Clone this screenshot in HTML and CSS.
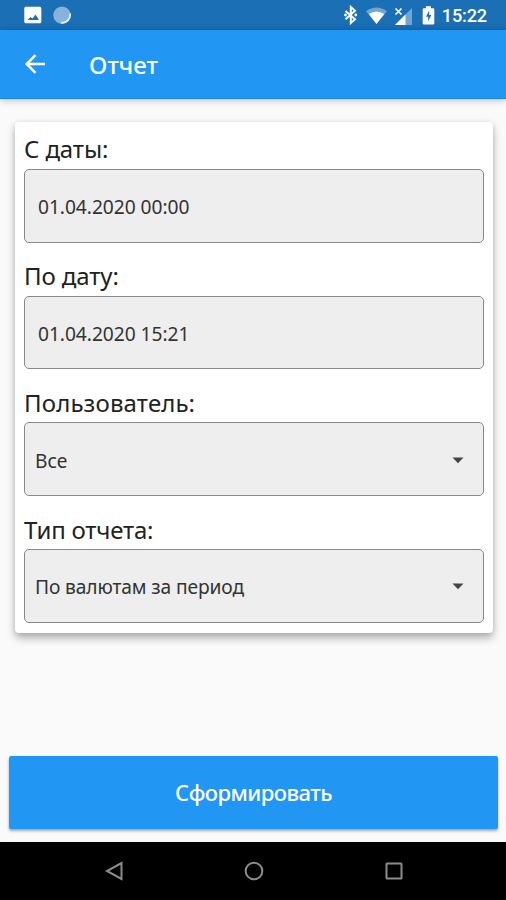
FILE: index.html
```html
<!DOCTYPE html>
<html lang="ru">
<head>
<meta charset="utf-8">
<title>Отчет</title>
<link rel="stylesheet" href="styles.css">
</head>
<body>
<div class="screen">
  <div class="status">
    <svg class="status-left" width="50" height="18" viewBox="0 0 50 18">
      <rect x="0.3" y="0.8" width="17" height="16.5" rx="1.5" fill="#fff"/>
      <path d="M3.500 14l3-3 2 1.500 3-4 3.500 5.500z" fill="#1a6fb5"/>
      <circle cx="38" cy="9.200" r="8.700" fill="#86b2dc"/>
      <path d="M46 7.500a8 8 0 0 1-9 9.200" fill="none" stroke="#e6f1fa" stroke-width="1.800"/>
    </svg>
    <div class="status-right">
      <svg width="92" height="20" viewBox="0 0 92 20">
        <path d="M2.500 6L12 14.300L7.800 18V2L12 5.800L2.500 14.200" fill="none" stroke="#fff" stroke-width="2"/>
        <circle cx="2.500" cy="10" r="1.400" fill="#fff"/><circle cx="12.800" cy="10" r="1.400" fill="#fff"/>
        <path d="M23 6.200Q33.300-1.200 44 6.200L33.500 19z" fill="#6ea6d6"/>
        <path d="M25.800 9Q33.500 4 41.200 9L33.500 19z" fill="#fff"/>
        <path d="M69 3V20H52z" fill="#6ea6d6"/>
        <path d="M62.500 9.500V20H52z" fill="#fff"/>
        <path d="M52.500 3.500l6 6m0-6l-6 6" stroke="#fff" stroke-width="1.700"/>
        <path d="M83 1.300h5v2h2a1.300 1.300 0 0 1 1.300 1.300V18.300a1.300 1.300 0 0 1-1.300 1.300h-9A1.300 1.300 0 0 1 79.700 18.300V4.600A1.300 1.300 0 0 1 81 3.300h2z" fill="#fff"/>
        <path d="M86.200 5.500L83 11.700h2.200v4.500L88.300 10h-2.100z" fill="#1a6fb5"/>
      </svg>
      <span class="clock">15:22</span>
    </div>
  </div>
  <header class="appbar">
    <svg width="22" height="20" viewBox="0 0 22 20" fill="none" stroke="#fff" stroke-width="2.500"><path d="M21 10H3M11.500 1.200L2.700 10L11.500 18.800"/></svg>
    <h1 class="title">Отчет</h1>
  </header>
  <main class="content">
    <section class="card">
      <div class="label from">С даты:</div>
      <div class="field date"><span>01.04.2020 00:00</span></div>
      <div class="label to">По дату:</div>
      <div class="field date"><span>01.04.2020 15:21</span></div>
      <div class="label user">Пользователь:</div>
      <div class="field"><span class="all">Все</span><svg width="12" height="7" viewBox="0 0 12 7"><path d="M0.500 0.500h11L6 6.300z" fill="#444"/></svg></div>
      <div class="label type">Тип отчета:</div>
      <div class="field"><span class="period">По валютам за период</span><svg width="12" height="7" viewBox="0 0 12 7"><path d="M0.500 0.500h11L6 6.300z" fill="#444"/></svg></div>
    </section>
    <button class="submit"><span>Сформировать</span></button>
  </main>
  <nav class="nav">
    <svg width="20" height="20" viewBox="0 0 20 20"><path d="M17.500 2v16L3 10z"/></svg>
    <svg width="20" height="20" viewBox="0 0 20 20"><circle cx="10" cy="10" r="8.300"/></svg>
    <svg width="20" height="20" viewBox="0 0 20 20"><rect x="2.500" y="2.500" width="15" height="15" rx="0.500"/></svg>
  </nav>
</div>
</body>
</html>
```

FILE: styles.css
```css
* { box-sizing: border-box; }
body { margin: 0; font-family: "Noto Sans", sans-serif; background: #fafafa; }
.screen { width: 506px; height: 900px; display: flex; flex-direction: column; overflow: hidden; }
.status { height: 30px; flex: none; background: #1a6fb5; display: flex; justify-content: space-between; align-items: flex-start; padding: 6px 19px 0 24px; }
.status-right { display: flex; gap: 7px; }
.status-right svg { margin-top: -1px; }
.clock { font: 500 18.200px/20px Roboto, sans-serif; color: #fff; letter-spacing: -0.200px; }
.appbar { height: 69px; flex: none; background: #2196f3; display: flex; align-items: center; padding: 0 24px; gap: 43px; border-bottom: 1px solid #128ae8; box-shadow: 0 1px 7px rgba(0,0,0,.28); }
.title { margin: 2px 0 0; font-size: 24px; line-height: 30px; font-weight: 500; color: #fff; }
.content { flex: 1; display: flex; flex-direction: column; justify-content: space-between; padding: 23px 8px 13px 9px; }
.card { margin: 0 5px 0 6px; height: 511px; background: #fff; border-radius: 4px; padding: 0 9px; box-shadow: 0 5px 9px rgba(0,0,0,.3), 0 0 5px rgba(0,0,0,.08); }
.label { height: 53px; padding: 17px 0 0; font-size: 24px; line-height: 32px; color: #222; white-space: nowrap; }
.label.from { height: 47px; padding-top: 11px; letter-spacing: -0.100px; }
.label.to { letter-spacing: -0.100px; }
.label.user { padding-top: 18px; letter-spacing: 0.150px; }
.label.type { padding-top: 18px; letter-spacing: -0.200px; }
.field { height: 73.700px; border: 1px solid #888; border-radius: 5px; background: #eee; display: flex; align-items: center; justify-content: space-between; padding: 2px 19px 0 10px; font-size: 19.200px; color: #333; white-space: nowrap; }
.field.date { padding-left: 13px; }
.field.date span { letter-spacing: -0.050px; }
.period { letter-spacing: -0.120px; }
.submit { height: 73px; flex: none; padding: 0 0 2px; border: 0; border-radius: 2px; background: #2196f3; color: #fff; font: 500 22px/30px "Noto Sans", sans-serif; letter-spacing: -0.550px; box-shadow: 0 2px 3px rgba(0,0,0,.35); }
.nav { height: 58px; flex: none; background: #000; display: flex; justify-content: center; align-items: center; gap: 120px; padding-left: 1px; }
.nav svg { fill: none; stroke: #8c8c8c; stroke-width: 2; }
```
